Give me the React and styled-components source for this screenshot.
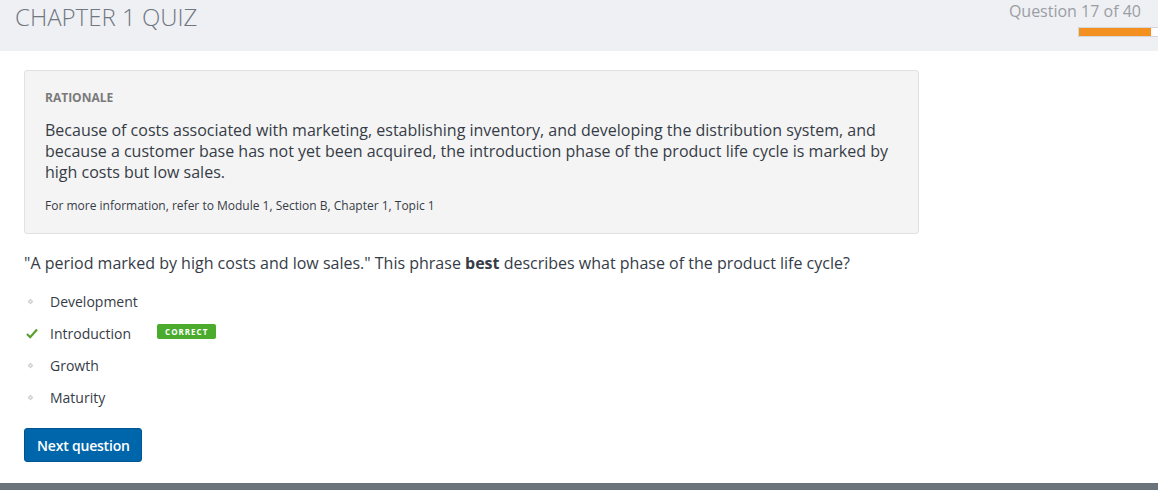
import React from "react";
import styled, { createGlobalStyle } from "styled-components";

const Global = createGlobalStyle`
  html, body { margin: 0; padding: 0; background: #fff; }
  body { font-family: "Open Sans", "Liberation Sans", sans-serif; color: #363c47; width: 1158px; height: 490px; overflow: hidden; }
  #root { height: 490px; display: flex; flex-direction: column; }
`;

const Header = styled.header`
  height: 51px;
  background: #eff0f4;
  display: flex;
  justify-content: space-between;
  align-items: flex-start;
  flex-shrink: 0;
  overflow: hidden;
`;

const Title = styled.h1`
  margin: 1px 0 0 15px;
  font-size: 24px;
  font-weight: 300;
  color: #6f7781;
  line-height: 32px;
`;

const Progress = styled.div`
  display: flex;
  flex-direction: column;
  align-items: flex-end;
  margin-right: 17px;
`;

const Counter = styled.div`
  font-size: 16px;
  color: #9a9ea3;
  line-height: 20px;
  margin-top: 1px;
`;

const Track = styled.div`
  width: 96px;
  height: 8px;
  margin-top: 6px;
  margin-right: -35px;
  border: 1px solid #d4d6da;
  background: #fff;
  flex-shrink: 0;
  display: flex;
`;

const Fill = styled.div`
  height: 8px;
  background: #f39020;
`;

const Main = styled.main`
  flex: 1;
  padding: 19px 0 0 24px;
`;

const Rationale = styled.section`
  width: 895px;
  box-sizing: border-box;
  background: #f4f4f4;
  border: 1px solid #e1e1e1;
  border-radius: 3px;
  padding: 18px 20px 19px 20px;
`;

const Label = styled.div`
  font-size: 12px;
  font-weight: 700;
  color: #7a7a7a;
  line-height: 17px;
`;

const Body = styled.p`
  margin: 14px 0 0;
  font-size: 16px;
  line-height: 21px;
  color: #363c47;
`;

const Note = styled.p`
  margin: 14px 0 0;
  font-size: 12px;
  line-height: 17px;
  color: #363c47;
`;

const Question = styled.p`
  margin: 18px 0 0;
  font-size: 16px;
  line-height: 22px;
  color: #363c47;
`;

const Options = styled.ul`
  list-style: none;
  margin: 17px 0 0;
  padding: 0;
  display: flex;
  flex-direction: column;
  gap: 12px;
`;

const Option = styled.li`
  display: flex;
  align-items: center;
  height: 20px;
  font-size: 14px;
  color: #363c47;
`;

const Marker = styled.span`
  width: 26px;
  display: flex;
  justify-content: flex-start;
  align-items: center;
  padding-left: ${(p) => (p.$check ? "2px" : "3px")};
  box-sizing: border-box;
`;

const Badge = styled.span`
  margin-left: 26px;
  background: #4aab2c;
  color: #fff;
  font-size: 8px;
  font-weight: 700;
  letter-spacing: 1px;
  padding: 0 8px;
  height: 15px;
  line-height: 15px;
  border-radius: 2px;
  margin-top: -3px;
`;

const Button = styled.button`
  margin-top: 21px;
  background: #0066ab;
  color: #fff;
  border: 1px solid #005591;
  border-radius: 3px;
  font-family: inherit;
  font-size: 14px;
  font-weight: 600;
  height: 34px;
  padding: 0 11px 0 12px;
  letter-spacing: -0.2px;
  cursor: pointer;
`;

const Footer = styled.footer`
  height: 7px;
  background: #6b747b;
  flex-shrink: 0;
`;

const Diamond = () => (
  <svg width="7" height="7" viewBox="0 0 7 7">
    <path d="M3.5 0.5 L6.5 3.5 L3.5 6.5 L0.5 3.5 Z" fill="#d3d5d8" />
    <rect x="3" y="3" width="1" height="1" fill="#fff" />
  </svg>
);

const Check = () => (
  <svg width="12" height="11" viewBox="0 0 12 11">
    <path d="M1 6 L4.2 9.2 L11 1.5" fill="none" stroke="#5a9e2f" strokeWidth="2.2" />
  </svg>
);

const options = [
  { text: "Development" },
  { text: "Introduction", correct: true },
  { text: "Growth" },
  { text: "Maturity" },
];

export default function App() {
  return (
    <>
      <Global />
      <Header>
        <Title>CHAPTER 1 QUIZ</Title>
        <Progress>
          <Counter>Question 17 of 40</Counter>
          <Track>
            <Fill style={{ width: `${Math.round((17 / 40) * 170)}px` }} />
          </Track>
        </Progress>
      </Header>
      <Main>
        <Rationale>
          <Label>RATIONALE</Label>
          <Body>
            Because of costs associated with marketing, establishing inventory, and developing the distribution system, and because a customer base has not yet been acquired, the introduction phase of the product life cycle is marked by high costs but low sales.
          </Body>
          <Note>For more information, refer to Module 1, Section B, Chapter 1, Topic 1</Note>
        </Rationale>
        <Question>
          "A period marked by high costs and low sales." This phrase <b>best</b> describes what phase of the product life cycle?
        </Question>
        <Options>
          {options.map((o) => (
            <Option key={o.text}>
              <Marker $check={o.correct}>{o.correct ? <Check /> : <Diamond />}</Marker>
              {o.text}
              {o.correct && <Badge>CORRECT</Badge>}
            </Option>
          ))}
        </Options>
        <Button>Next question</Button>
      </Main>
      <Footer />
    </>
  );
}
